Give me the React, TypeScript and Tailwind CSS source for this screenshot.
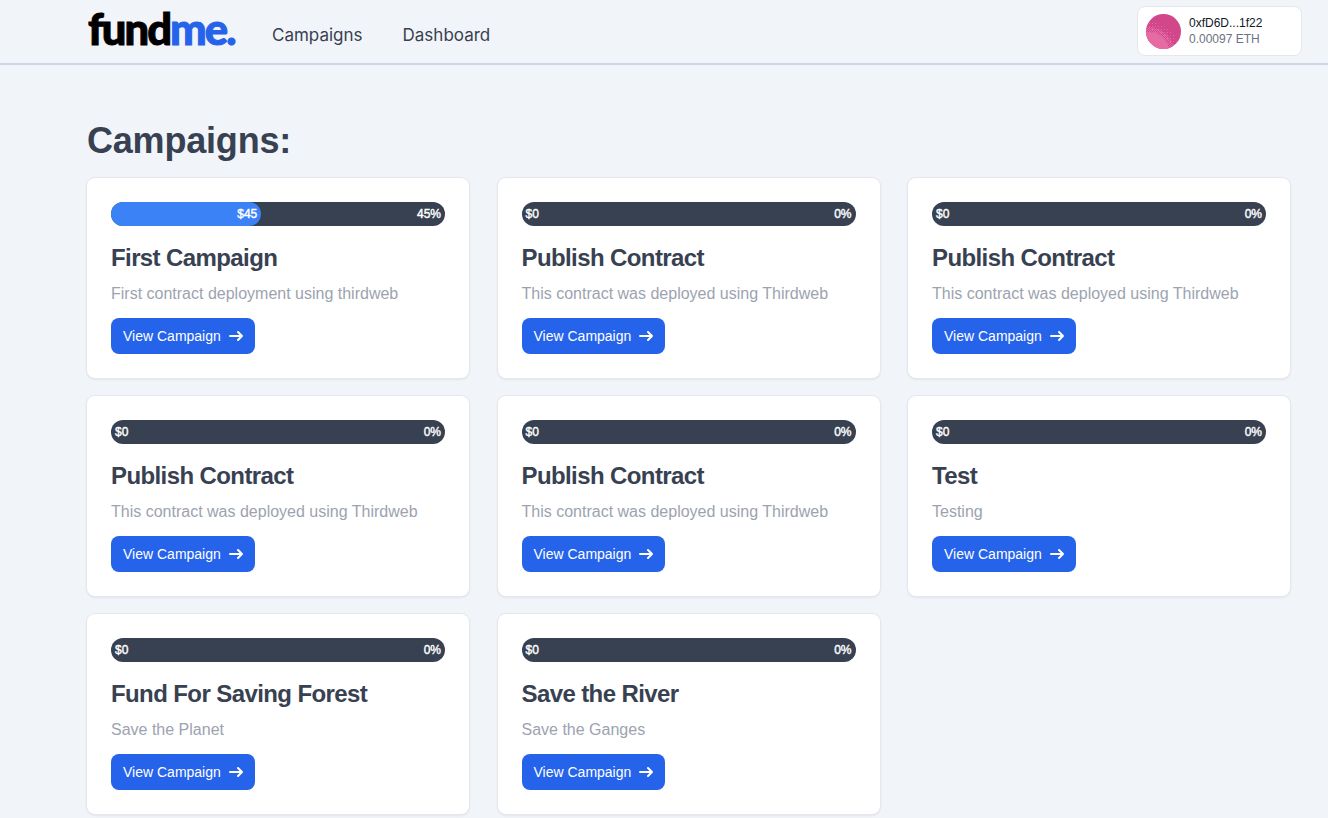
const campaigns = [
  { title: "First Campaign", text: "First contract deployment using thirdweb", amount: 45 },
  { title: "Publish Contract", text: "This contract was deployed using Thirdweb", amount: 0 },
  { title: "Publish Contract", text: "This contract was deployed using Thirdweb", amount: 0 },
  { title: "Publish Contract", text: "This contract was deployed using Thirdweb", amount: 0 },
  { title: "Publish Contract", text: "This contract was deployed using Thirdweb", amount: 0 },
  { title: "Test", text: "Testing", amount: 0 },
  { title: "Fund For Saving Forest", text: "Save the Planet", amount: 0 },
  { title: "Save the River", text: "Save the Ganges", amount: 0 },
];

function Avatar() {
  return (
    <svg width="35" height="35" viewBox="0 0 35 35" className="shrink-0">
      <defs>
        <pattern id="sparse" width="3" height="3" patternUnits="userSpaceOnUse">
          <rect width="1" height="1" fill="#e66aa3" />
        </pattern>
        <pattern id="dense" width="2" height="2" patternUnits="userSpaceOnUse">
          <rect width="1" height="1" fill="#e66aa3" />
          <rect x="1" y="1" width="1" height="1" fill="#e66aa3" />
        </pattern>
        <clipPath id="disc">
          <circle cx="17.5" cy="17.5" r="17.5" />
        </clipPath>
      </defs>
      <g clipPath="url(#disc)">
        <rect width="35" height="35" fill="#d2468a" />
        <circle cx="3" cy="38" r="30" fill="url(#sparse)" />
        <circle cx="3" cy="38" r="25" fill="url(#dense)" />
        <circle cx="3" cy="38" r="20" fill="#e66aa3" />
      </g>
    </svg>
  );
}

function Card({ title, text, amount }: { title: string; text: string; amount: number }) {
  return (
    <div className="h-[200px] rounded-lg bg-white p-6 shadow-[0_0_0_1px_#e5e7eb,0_1px_3px_rgba(0,0,0,0.12)]">
      <div className="relative flex h-6 items-center justify-between rounded-full bg-[#374151] px-1 text-xs text-white [-webkit-text-stroke:0.4px_white]">
        {amount > 0 ? (
          <div className="absolute inset-y-0 left-0 flex w-[45%] items-center justify-end rounded-full bg-[#3b82f6] pr-1">
            ${amount}
          </div>
        ) : (
          <span>$0</span>
        )}
        <span className="relative ml-auto">{amount}%</span>
      </div>
      <h5 className="mt-4 text-2xl leading-8 font-bold tracking-tight text-[#374151]">{title}</h5>
      <p className="mt-1 mb-2 leading-[32px] text-[#9ca3af]">{text}</p>
      <a className="inline-flex h-9 items-center rounded-lg bg-[#2563eb] px-3 text-sm text-white">
        View Campaign
        <svg className="ml-2 h-3.5 w-3.5" viewBox="0 0 14 10" fill="none">
          <path
            d="M1 5h12m0 0L9 1m4 4L9 9"
            stroke="currentColor"
            strokeWidth="2"
            strokeLinecap="round"
            strokeLinejoin="round"
          />
        </svg>
      </a>
    </div>
  );
}

export default function App() {
  return (
    <div className="h-[818px] overflow-hidden bg-[#f1f4f9] font-['Liberation_Sans',Arial,sans-serif]">
      <nav className="flex h-[65px] items-center border-b-2 border-[#cdd6e3] pr-[26px] pl-[88px]">
        <div className="-mt-[5px] w-[184px] font-['Lato',sans-serif] text-[43.5px] leading-none font-black tracking-[-0.045em] text-black [-webkit-text-stroke-width:1px]">
          fund<span className="text-[#2563eb]">me.</span>
        </div>
        <div className="mt-2 flex gap-10 font-['Inter',sans-serif] text-[17px] text-[#374151]">
          <a>Campaigns</a>
          <a>Dashboard</a>
        </div>
        <div className="-mt-px ml-auto flex h-[50px] w-[165px] items-center gap-2 rounded-lg border border-gray-200 bg-white pl-2">
          <Avatar />
          <div className="text-xs leading-4">
            <div className="text-[#111827]">0xfD6D...1f22</div>
            <div className="text-[#6b7280]">0.00097 ETH</div>
          </div>
        </div>
      </nav>
      <main className="ml-[87px] w-[1203px] pt-[56px]">
        <h1 className="mb-[17px] text-4xl leading-10 font-bold tracking-[-0.2px] text-[#374151]">Campaigns:</h1>
        <div className="grid grid-cols-3 gap-x-[28.5px] gap-y-[18px]">
          {campaigns.map((c, i) => (
            <Card key={i} {...c} />
          ))}
        </div>
      </main>
    </div>
  );
}
